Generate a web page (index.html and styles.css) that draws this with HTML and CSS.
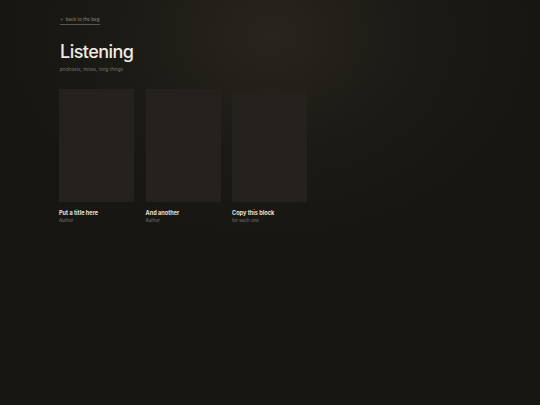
FILE: index.html
```html
<!DOCTYPE html>
<html>
<head>
<meta charset="utf-8">
<link rel="stylesheet" href="styles.css">
</head>
<body>
<main class="page">
  <a class="back" href="#">← back to the bag</a>
  <h1 class="title">Listening</h1>
  <p class="sub">podcasts, mixes, long things</p>
  <div class="grid">
    <div class="item">
      <div class="cover"></div>
      <div class="name">Put a title here</div>
      <div class="author">Author</div>
    </div>
    <div class="item">
      <div class="cover"></div>
      <div class="name">And another</div>
      <div class="author">Author</div>
    </div>
    <div class="item">
      <div class="cover"></div>
      <div class="name">Copy this block</div>
      <div class="author">for each one</div>
    </div>
  </div>
</main>
</body>
</html>
```
FILE: styles.css
```css
html, body {
  margin: 0;
  height: 100%;
}
body {
  background:
    radial-gradient(ellipse 270px 210px at 270px 35px, rgba(48,43,34,0.7), rgba(38,34,27,0.35) 55%, rgba(23,22,18,0) 100%),
    #171612;
  font-family: Inter, "Liberation Sans", sans-serif;
  color: #ebe7df;
  min-height: 405px;
  -webkit-font-smoothing: antialiased;
}
.page {
  padding: 16px 60px 0 60px;
  display: flex;
  flex-direction: column;
  align-items: flex-start;
}
.back {
  font-size: 4.6px;
  color: #8d887e;
  text-decoration: none;
  border-bottom: 0.5px solid #5a564f;
  padding-bottom: 1px;
  line-height: 7px;
}
.title {
  margin: 15px 0 0 0;
  font-size: 18px;
  font-weight: 500;
  letter-spacing: -0.03em;
  line-height: 24px;
  color: #efebe4;
}
.sub {
  margin: 2px 0 0 0;
  font-size: 4.7px;
  font-style: italic;
  color: #77736b;
  line-height: 7px;
}
.grid {
  margin-top: 16px;
  margin-left: -1px;
  display: grid;
  grid-template-columns: repeat(3, 75px);
  column-gap: 11.5px;
}
.cover {
  height: 113px;
  background: #25221d;
}
.name {
  margin-top: 7px;
  font-size: 5.6px;
  font-weight: 700;
  color: #e6e2da;
  line-height: 8px;
}
.author {
  font-size: 4.5px;
  color: #7e7a72;
  line-height: 7px;
}
```
